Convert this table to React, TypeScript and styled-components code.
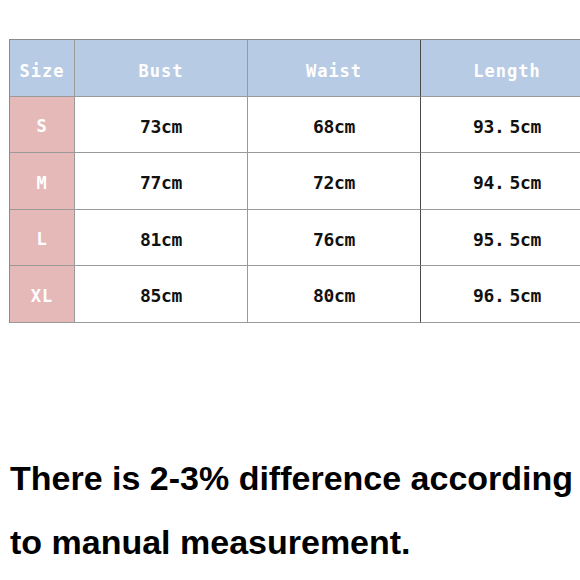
import React from "react";
import styled, { createGlobalStyle } from "styled-components";

const Global = createGlobalStyle`
  html, body { margin: 0; padding: 0; background: #fff; overflow: hidden; }
  body { width: 580px; height: 580px; }
`;

const Page = styled.div`
  width: 580px;
  height: 580px;
  overflow: hidden;
  padding-top: 39px;
  padding-left: 9px;
  box-sizing: border-box;
`;

const Table = styled.div`
  display: grid;
  grid-template-columns: 65px 173px 173px 173px;
  grid-auto-rows: 56.5px;
  width: 584px;
  border-top: 1px solid #8a8a8a;
  border-left: 1px solid #8a8a8a;
`;

const Cell = styled.div<{ $kind: "head" | "size" | "data"; $dark?: boolean }>`
  display: flex;
  align-items: center;
  justify-content: center;
  white-space: pre;
  padding-top: ${(p) => (p.$kind === "head" ? "6px" : "4px")};
  box-sizing: border-box;
  border-right: 1px solid ${(p) => (p.$dark ? "#4a4a4a" : "#9a9a9a")};
  border-bottom: 1px solid #9a9a9a;
  font-family: "DejaVu Sans Mono", "Liberation Mono", monospace;
  font-size: ${(p) => (p.$kind === "data" ? "18px" : "17px")};
  font-weight: bold;
  background: ${(p) =>
    p.$kind === "head" ? "#b8cbe4" : p.$kind === "size" ? "#e6b9b9" : "#fff"};
  color: ${(p) => (p.$kind === "data" ? "#111" : "#fff")};
  letter-spacing: ${(p) => (p.$kind === "data" ? "-0.3px" : "1px")};
`;

const Gap = styled.span`
  display: inline-block;
  width: 5px;
`;

const Note = styled.p`
  margin: 123px 0 0 1px;
  font-family: "Liberation Sans", Arial, sans-serif;
  font-weight: bold;
  font-size: 34px;
  line-height: 64px;
  color: #000;
  white-space: nowrap;
`;

const headers = ["Size", "Bust", "Waist", "Length"];
const rows = [
  ["S", "73cm", "68cm", "93.", "5cm"],
  ["M", "77cm", "72cm", "94.", "5cm"],
  ["L", "81cm", "76cm", "95.", "5cm"],
  ["XL", "85cm", "80cm", "96.", "5cm"],
];

export default function App() {
  return (
    <>
      <Global />
      <Page>
        <Table>
          {headers.map((h, i) => (
            <Cell key={h} $kind="head" $dark={i === 2}>
              {h}
            </Cell>
          ))}
          {rows.map((r) => (
            <React.Fragment key={r[0]}>
              <Cell $kind="size">{r[0]}</Cell>
              <Cell $kind="data">{r[1]}</Cell>
              <Cell $kind="data" $dark>
                {r[2]}
              </Cell>
              <Cell $kind="data">
                {r[3]}
                <Gap />
                {r[4]}
              </Cell>
            </React.Fragment>
          ))}
        </Table>
        <Note>
          There is 2-3% difference according
          <br />
          to manual measurement.
        </Note>
      </Page>
    </>
  );
}
